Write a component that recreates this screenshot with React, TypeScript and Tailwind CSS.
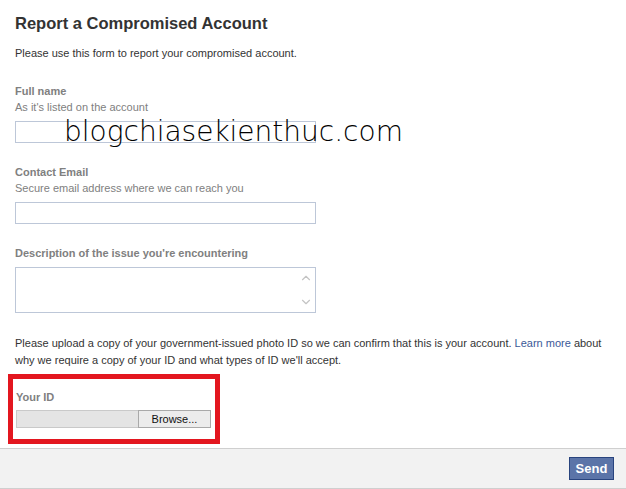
import { ChevronUp, ChevronDown } from 'lucide-react';

export default function App() {
  return (
    <div className="relative w-[626px] h-[489px] bg-white overflow-hidden font-['Liberation_Sans',Arial,sans-serif] text-[11px] text-[#333]">
      <div className="px-[15px]">
        {/* Header */}
        <h1 className="mt-[13px] text-[16.5px] leading-[20px] font-bold text-[#333]">
          Report a Compromised Account
        </h1>
        <p className="mt-[12px] leading-[16px]">Please use this form to report your compromised account.</p>

        {/* Full name */}
        <div className="mt-[22px] leading-[16px] font-bold text-[#808080]">Full name</div>
        <div className="leading-[16px] text-[#808080]">As it's listed on the account</div>
        <div className="mt-[6px] w-[301px] h-[22px] border border-[#bdc7d8] bg-white" />

        {/* Contact email */}
        <div className="mt-[21px] leading-[16px] font-bold text-[#808080]">Contact Email</div>
        <div className="leading-[16px] text-[#808080]">Secure email address where we can reach you</div>
        <div className="mt-[6px] w-[301px] h-[22px] border border-[#bdc7d8] bg-white" />

        {/* Description */}
        <div className="mt-[21px] leading-[16px] font-bold text-[#808080]">
          Description of the issue you're encountering
        </div>
        <div className="mt-[6px] w-[301px] h-[46px] border border-[#bdc7d8] bg-white flex justify-end">
          <div className="w-[18px] flex flex-col justify-between items-center py-[3px] text-[#c4c4c4]">
            <ChevronUp className="w-[14px] h-[14px]" strokeWidth={2} />
            <ChevronDown className="w-[14px] h-[14px]" strokeWidth={2} />
          </div>
        </div>

        <p className="mt-[22px] leading-[17px] pr-[8px]">
          Please upload a copy of your government-issued photo ID so we can confirm that this is your account.{' '}
          <span className="text-[#3b5998]">Learn more</span> about why we require a copy of your ID and what types of ID
          we'll accept.
        </p>

        {/* Your ID */}
        <div className="mt-[5px] -ml-[7px] w-[212px] h-[70px] border-[5px] border-[#e3161f] pl-[3px] pt-[10px]">
          <div className="leading-[16px] font-bold text-[#808080]">Your ID</div>
          <div className="mt-[5px] flex h-[18px]">
            <div className="w-[122px] bg-[#e4e4e4] border border-[#c9c9c9] border-r-0" />
            <div className="w-[73px] bg-[#ececec] border border-[#a9a9a9] flex items-center justify-center text-[11px] text-[#111]">
              Browse...
            </div>
          </div>
        </div>
      </div>

      {/* Footer */}
      <div className="mt-[4px] h-[41px] bg-[#f2f2f2] border-t border-b border-[#cfcfcf] flex justify-end pr-[12px] pt-[8px]">
        <div className="w-[45px] h-[23px] bg-[#5b74a8] border border-[#29447e] flex items-center justify-center text-white font-bold text-[13px]">
          Send
        </div>
      </div>

      {/* Watermark */}
      <div className="absolute left-[64px] top-[115px] text-[28px] leading-[34px] text-black font-['DejaVu_Sans',sans-serif] font-extralight">
        blogchiasekienthuc.com
      </div>
    </div>
  );
}
